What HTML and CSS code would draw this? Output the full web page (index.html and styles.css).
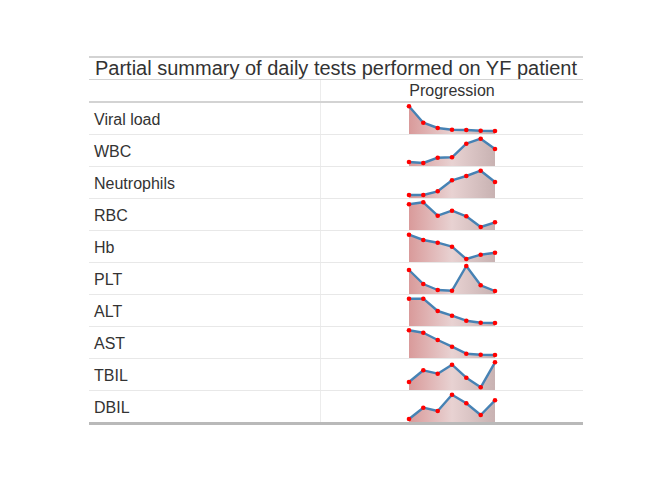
FILE: index.html
```html
<!DOCTYPE html>
<html>
<head>
<meta charset="utf-8">
<link rel="stylesheet" href="styles.css">
</head>
<body>
<svg class="defs" width="0" height="0">
  <defs>
    <linearGradient id="shade" x1="0" y1="0" x2="1" y2="0">
      <stop offset="0" stop-color="#d99a9a"/>
      <stop offset="0.5" stop-color="#e8d2d2"/>
      <stop offset="1" stop-color="#c8b2b2"/>
    </linearGradient>
  </defs>
</svg>
<div class="wrap">
  <div class="tbl">
    <div class="title">Partial summary of daily tests performed on YF patient</div>
    <div class="head"><div class="stub"></div><div class="col">Progression</div></div>
    <div class="row"><div class="label">Viral load</div><div class="spark" data-y="3.3,19.7,25,26.7,27,27.7,28"></div></div>
    <div class="row"><div class="label">WBC</div><div class="spark" data-y="27,28,22.7,22.3,8.7,3.7,14"></div></div>
    <div class="row"><div class="label">Neutrophils</div><div class="spark" data-y="28,28,24.3,13.3,9,3.7,15"></div></div>
    <div class="row"><div class="label">RBC</div><div class="spark" data-y="5.3,3.3,16.7,11.7,17.3,28,23.3"></div></div>
    <div class="row"><div class="label">Hb</div><div class="spark" data-y="3.7,9,11.7,15.7,28,23.7,21.7"></div></div>
    <div class="row"><div class="label">PLT</div><div class="spark" data-y="7,21,27,27.7,3,22.3,28"></div></div>
    <div class="row"><div class="label">ALT</div><div class="spark" data-y="3.7,3.7,16,20.7,25.7,27.7,28"></div></div>
    <div class="row"><div class="label">AST</div><div class="spark" data-y="3.3,5.7,13,19.7,26.7,27.7,28"></div></div>
    <div class="row"><div class="label">TBIL</div><div class="spark" data-y="23,11.3,14.7,5.7,18.7,28.3,3.3"></div></div>
    <div class="row"><div class="label">DBIL</div><div class="spark" data-y="28,16.7,20,3.7,12.3,24,9.3"></div></div>
  </div>
</div>
<script src="script.js"></script>
</body>
</html>
```

FILE: styles.css
```css
body {
  margin: 0;
  font-family: "Liberation Sans", Arial, sans-serif;
  color: #333333;
  background: #ffffff;
}
.defs {
  position: absolute;
  width: 0;
  height: 0;
}
.wrap {
  padding-top: 56px;
  display: flex;
  justify-content: center;
}
.tbl {
  width: 494px;
  border-top: 2px solid #d3d3d3;
  border-bottom: 3px solid #b9b9b9;
}
.title {
  height: 21px;
  font-size: 20px;
  line-height: 21px;
  text-align: center;
  border-bottom: 1px solid #d3d3d3;
}
.head {
  display: flex;
  height: 21px;
  border-bottom: 2px solid #d3d3d3;
}
.stub {
  width: 231px;
  border-right: 1px solid #ececec;
}
.col {
  flex: 1;
  text-align: center;
  font-size: 16px;
  line-height: 18px;
  padding-top: 2px;
}
.row {
  display: flex;
  height: 31px;
  border-bottom: 1px solid #e8e8e8;
}
.row:last-child {
  border-bottom: none;
}
.label {
  width: 226px;
  padding: 8px 0 0 5px;
  font-size: 16px;
  line-height: 18px;
  border-right: 1px solid #ececec;
}
.spark {
  flex: 1;
  display: flex;
  justify-content: center;
}
.spark svg {
  display: block;
}
```

FILE: script.js
```js
var xs = [7, 21.3, 35.7, 50, 64.3, 78.7, 93];
var NS = "http://www.w3.org/2000/svg";
document.querySelectorAll(".spark").forEach(function (el) {
  var ys = el.dataset.y.split(",").map(Number);
  var svg = document.createElementNS(NS, "svg");
  svg.setAttribute("width", "100");
  svg.setAttribute("height", "31");
  svg.setAttribute("viewBox", "0 0 100 31");
  var pts = ys.map(function (y, i) { return xs[i] + "," + y; }).join(" ");
  var poly = xs[0] + ",31 " + pts + " " + xs[xs.length - 1] + ",31";
  var area = document.createElementNS(NS, "polygon");
  area.setAttribute("points", poly);
  area.setAttribute("fill", "url(#shade)");
  svg.appendChild(area);
  var line = document.createElementNS(NS, "polyline");
  line.setAttribute("points", pts);
  line.setAttribute("fill", "none");
  line.setAttribute("stroke", "#4682b4");
  line.setAttribute("stroke-width", "2.4");
  line.setAttribute("stroke-linejoin", "round");
  line.setAttribute("stroke-linecap", "round");
  svg.appendChild(line);
  ys.forEach(function (y, i) {
    var c = document.createElementNS(NS, "circle");
    c.setAttribute("cx", xs[i]);
    c.setAttribute("cy", y);
    c.setAttribute("r", "2.3");
    c.setAttribute("fill", "#ff0000");
    svg.appendChild(c);
  });
  el.appendChild(svg);
});
```
